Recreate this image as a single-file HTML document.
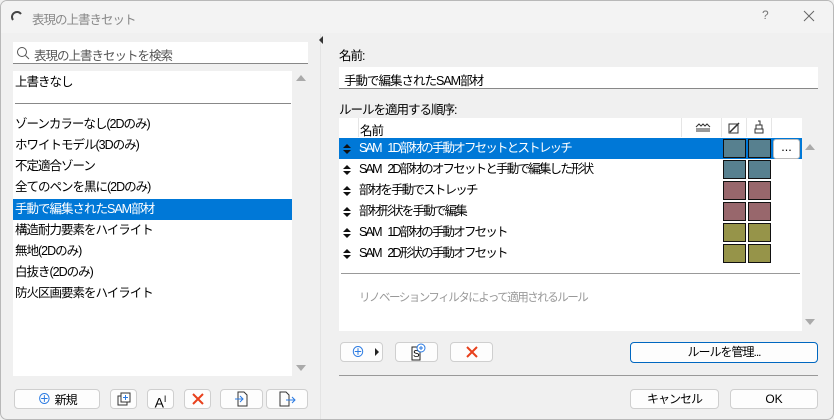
<!DOCTYPE html>
<html><head><meta charset="utf-8"><style>
*{box-sizing:border-box;margin:0;padding:0}
body{width:834px;height:420px;overflow:hidden;background:#f0f0f0;font-family:"Liberation Sans","Noto Sans CJK JP",sans-serif;font-size:12px;color:#000;position:relative;letter-spacing:-1px;word-spacing:2px}
.a{position:absolute}
.win{left:0;top:0;width:834px;height:420px;border:1px solid #b8b8b8;border-radius:7px;background:#f0f0f0;overflow:hidden}
.title{left:0;top:0;width:834px;height:32px;background:#f3f3f3}
.btn{position:absolute;background:#fdfdfd;border:1px solid #cfcfcf;border-radius:4px;text-align:center;line-height:18px;font-size:12px}
.li{position:absolute;left:0;width:279px;height:21px;line-height:21px;padding-left:2px;font-size:12.5px}
.row{position:absolute;left:0;width:463px;height:21px;line-height:21px;font-size:12.5px;letter-spacing:-1.8px;word-spacing:5px}
.sw{position:absolute;top:1px;width:23px;height:19px;border:1.5px solid #111}
.ud{position:absolute;left:4px;top:6px;width:8px;height:10px}
</style></head><body>
<div class="a win">
<div class="a title"></div>
<svg class="a" style="left:10px;top:9px" width="12" height="12"><path d="M2 10 A5 5 0 0 1 10 4" stroke="#444" stroke-width="2" fill="none"/></svg>
<div class="a" style="left:31px;top:8px;color:#888;font-size:12.5px">表現の上書きセット</div>
<div class="a" style="left:761px;top:7px;color:#777;font-size:12px">?</div>
<svg class="a" style="left:802px;top:9px" width="12" height="12"><path d="M1 1L11 11M11 1L1 11" stroke="#666" stroke-width="1"/></svg>

<div class="a" style="left:12px;top:41px;width:295px;height:22px;background:#fff;border-bottom:1px solid #888"></div>
<svg class="a" style="left:15px;top:45px" width="14" height="14"><circle cx="6" cy="6" r="4.5" stroke="#555" fill="none"/><path d="M9.5 9.5L13 13" stroke="#555"/></svg>
<div class="a" style="left:33px;top:44px;color:#555;font-size:12.5px">表現の上書きセットを検索</div>
<div class="a" style="left:12px;top:70px;width:279px;height:305px;background:#fff">
 <div class="li" style="top:1px">上書きなし</div>
 <div class="a" style="left:2px;top:32px;width:276px;height:1px;background:#888"></div>
 <div class="li" style="top:43px">ゾーンカラーなし(2Dのみ)</div>
 <div class="li" style="top:64px">ホワイトモデル(3Dのみ)</div>
 <div class="li" style="top:85px">不定適合ゾーン</div>
 <div class="li" style="top:106px">全てのペンを黒に(2Dのみ)</div>
 <div class="li" style="top:128px;background:#0078d7;color:#fff">手動で編集されたSAM部材</div>
 <div class="li" style="top:149px">構造耐力要素をハイライト</div>
 <div class="li" style="top:170px">無地(2Dのみ)</div>
 <div class="li" style="top:191px">白抜き(2Dのみ)</div>
 <div class="li" style="top:212px">防火区画要素をハイライト</div>
</div>
<div class="a" style="left:295px;top:74px;width:0;height:0;border:5px solid transparent;border-bottom:6px solid #aaa;border-top:0"></div>
<div class="a" style="left:295px;top:364px;width:0;height:0;border:5px solid transparent;border-top:6px solid #aaa;border-bottom:0"></div>

<div class="btn" style="left:13px;top:388px;width:86px;height:20px"><span style="color:#2a7ae2;font-size:14px">⊕</span> 新規</div>
<div class="btn" style="left:109px;top:388px;width:27px;height:20px"><svg width="16" height="16" style="margin-top:1px"><rect x="2" y="5" width="9" height="9" fill="none" stroke="#333"/><rect x="5" y="2" width="9" height="9" fill="#fff" stroke="#333"/><path d="M9.5 4v5M7 6.5h5" stroke="#2a7ae2"/></svg></div>
<div class="btn" style="left:146px;top:388px;width:27px;height:20px;font-size:14px;letter-spacing:0">A<sup style="font-size:9px">I</sup></div>
<div class="btn" style="left:183px;top:388px;width:27px;height:20px"><svg width="14" height="14" style="margin-top:2px"><path d="M2 2L12 12M12 2L2 12" stroke="#e8401c" stroke-width="2"/></svg></div>
<div class="btn" style="left:219px;top:388px;width:43px;height:20px"><svg width="16" height="16" style="margin-top:1px"><path d="M4 1h6l3 3v11H4z" fill="none" stroke="#333"/><path d="M1 8h8M6 5l3 3-3 3" stroke="#2a7ae2" fill="none"/></svg></div>
<div class="btn" style="left:265px;top:388px;width:42px;height:20px"><svg width="18" height="16" style="margin-top:1px"><path d="M2 1h6l3 3v11H2z" fill="none" stroke="#333"/><path d="M8 9h9M14 6l3 3-3 3" stroke="#2a7ae2" fill="none"/></svg></div>

<div class="a" style="left:319px;top:33px;width:1px;height:387px;background:#e4e4e4"></div>
<div class="a" style="left:318px;top:35px;width:0;height:0;border:4px solid transparent;border-right:4px solid #333;border-left:0"></div>

<div class="a" style="left:338px;top:44px;font-size:12.5px">名前:</div>
<div class="a" style="left:338px;top:66px;width:479px;height:22px;background:#fff;border-bottom:1px solid #888;padding:3px 5px;font-size:12.5px">手動で編集されたSAM部材</div>
<div class="a" style="left:338px;top:98px;font-size:12.5px">ルールを適用する順序:</div>
<div class="a" style="left:338px;top:117px;width:463px;height:213px;background:#fff">
 <div class="a" style="left:19px;top:0;width:1px;height:19px;background:#e5e5e5"></div>
 <div class="a" style="left:342px;top:0;width:1px;height:19px;background:#e5e5e5"></div>
 <div class="a" style="left:382px;top:0;width:1px;height:19px;background:#e5e5e5"></div>
 <div class="a" style="left:407px;top:0;width:1px;height:19px;background:#e5e5e5"></div>
 <div class="a" style="left:432px;top:0;width:1px;height:19px;background:#e5e5e5"></div>
 <div class="a" style="left:21px;top:2px;font-size:12.5px">名前</div>
 <svg class="a" style="left:356px;top:4px" width="16" height="10"><path d="M1 5l3-3 2 2 2-2 2 2 2-2 3 3M1 7h14M1 9h14" stroke="#333" fill="none"/></svg>
 <svg class="a" style="left:389px;top:3px" width="13" height="13"><rect x="1" y="3" width="9" height="9" fill="none" stroke="#333"/><path d="M2 11L11 2" stroke="#333" stroke-width="1.5"/></svg>
 <svg class="a" style="left:414px;top:2px" width="12" height="14"><path d="M5 1h2v4M3 5h6v4H3zM2 9h8v4H2z" stroke="#333" fill="none"/></svg>
 <div class="row" style="top:20px;background:#0078d7;color:#fff"><svg class="ud"><path d="M0 4L4 0L8 4zM0 6L4 10L8 6z" fill="#111"/></svg><span style="position:absolute;left:20px">SAM 1D部材の手動オフセットとストレッチ</span><div class="sw" style="left:384px;background:#57808f"></div><div class="sw" style="left:409px;background:#57808f"></div><div class="a" style="left:434px;top:1px;width:27px;height:20px;background:#fff;border:1px solid #bbb;border-radius:3px;color:#000;text-align:center;line-height:14px;letter-spacing:0">...</div></div>
 <div class="row" style="top:41px"><svg class="ud"><path d="M0 4L4 0L8 4zM0 6L4 10L8 6z" fill="#111"/></svg><span style="position:absolute;left:20px">SAM 2D部材のオフセットと手動で編集した形状</span><div class="sw" style="left:384px;background:#57808f"></div><div class="sw" style="left:409px;background:#57808f"></div></div>
 <div class="row" style="top:62px"><svg class="ud"><path d="M0 4L4 0L8 4zM0 6L4 10L8 6z" fill="#111"/></svg><span style="position:absolute;left:20px">部材を手動でストレッチ</span><div class="sw" style="left:384px;background:#98676c"></div><div class="sw" style="left:409px;background:#98676c"></div></div>
 <div class="row" style="top:83px"><svg class="ud"><path d="M0 4L4 0L8 4zM0 6L4 10L8 6z" fill="#111"/></svg><span style="position:absolute;left:20px">部材形状を手動で編集</span><div class="sw" style="left:384px;background:#98676c"></div><div class="sw" style="left:409px;background:#98676c"></div></div>
 <div class="row" style="top:104px"><svg class="ud"><path d="M0 4L4 0L8 4zM0 6L4 10L8 6z" fill="#111"/></svg><span style="position:absolute;left:20px">SAM 1D部材の手動オフセット</span><div class="sw" style="left:384px;background:#969449"></div><div class="sw" style="left:409px;background:#969449"></div></div>
 <div class="row" style="top:125px"><svg class="ud"><path d="M0 4L4 0L8 4zM0 6L4 10L8 6z" fill="#111"/></svg><span style="position:absolute;left:20px">SAM 2D形状の手動オフセット</span><div class="sw" style="left:384px;background:#969449"></div><div class="sw" style="left:409px;background:#969449"></div></div>
 <div class="a" style="left:2px;top:155px;width:459px;height:1px;background:#999"></div>
 <div class="a" style="left:20px;top:171px;color:#999;font-size:11.5px;letter-spacing:-1.5px">リノベーションフィルタによって適用されるルール</div>
</div>
<div class="a" style="left:804px;top:143px;width:0;height:0;border:5px solid transparent;border-bottom:6px solid #aaa;border-top:0"></div>
<div class="a" style="left:804px;top:318px;width:0;height:0;border:5px solid transparent;border-top:6px solid #aaa;border-bottom:0"></div>

<div class="btn" style="left:339px;top:341px;width:43px;height:20px;text-align:left;padding-left:10px"><span style="color:#2a7ae2;font-size:14px">⊕</span><span style="position:absolute;left:34px;top:5px;border:4px solid transparent;border-left:4px solid #222;border-right:0"></span></div>
<div class="btn" style="left:394px;top:341px;width:43px;height:20px"><svg width="20" height="18"><rect x="5" y="4" width="8" height="13" fill="none" stroke="#222"/><text x="6" y="14" font-size="10" font-family="Liberation Sans">S</text><circle cx="14" cy="5" r="4" fill="#fff" stroke="#2a7ae2"/><path d="M14 3v4M12 5h4" stroke="#2a7ae2"/></svg></div>
<div class="btn" style="left:449px;top:341px;width:43px;height:20px"><svg width="14" height="14" style="margin-top:2px"><path d="M2 2L12 12M12 2L2 12" stroke="#e8401c" stroke-width="2"/></svg></div>
<div class="btn" style="left:629px;top:341px;width:188px;height:21px;border:1px solid #0067c0">ルールを管理...</div>
<div class="a" style="left:338px;top:374px;width:479px;height:1px;background:#999"></div>
<div class="btn" style="left:629px;top:388px;width:89px;height:20px">キャンセル</div>
<div class="btn" style="left:729px;top:388px;width:88px;height:20px;letter-spacing:0">OK</div>
</div>
</body></html>
